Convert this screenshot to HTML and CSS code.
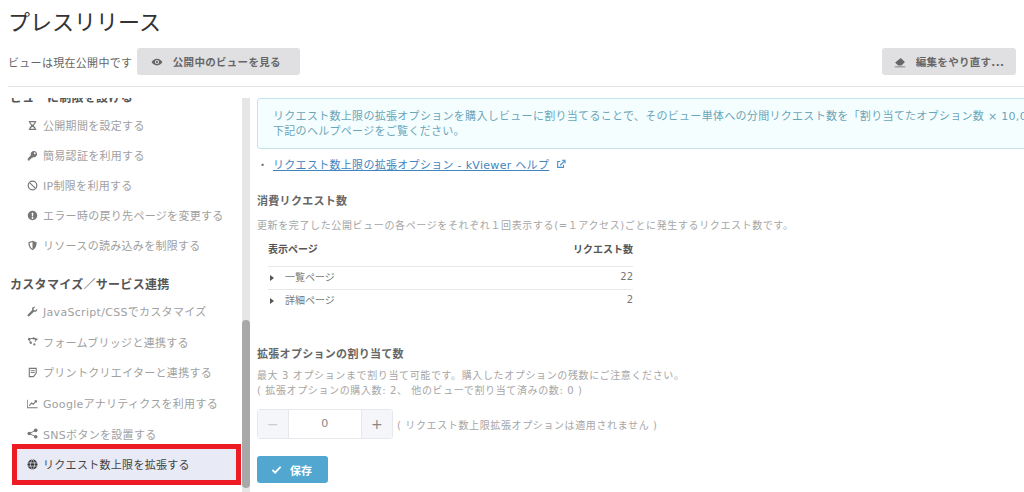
FILE: index.html
```html
<!DOCTYPE html>
<html lang="ja">
<head>
<meta charset="utf-8">
<title>プレスリリース</title>
<link rel="stylesheet" href="styles.css">
</head>
<body>
<header class="head">
  <h1 class="title">プレスリリース</h1>
  <div class="toolbar">
    <span class="status">ビューは現在公開中です</span>
    <button class="btn btn-left"><svg class="ico-btn" viewBox="0 0 16 16"><path d="M8 3.500C4.500 3.500 1.800 6 .8 8c1 2 3.700 4.500 7.200 4.500S14.200 10 15.200 8C14.200 6 11.500 3.500 8 3.500zm0 7.300A2.800 2.800 0 1 1 8 5.200a2.800 2.800 0 0 1 0 5.600zM8 6.500a1.500 1.500 0 1 0 0 3 1.500 1.500 0 0 0 0-3z" fill-rule="evenodd"/></svg>公開中のビューを見る</button>
    <button class="btn btn-right"><svg class="ico-btn" viewBox="0 0 16 16"><path d="M9 2.500l5.500 5.500L10 12.500H5.500L1.500 8.500z M1 14h14v1H1z"/></svg>編集をやり直す...</button>
  </div>
</header>
<div class="body">
  <nav class="side">
    <div class="side-scroll">
      <h2 class="side-h first">ビューに制限を設ける</h2>
      <a class="item"><svg class="ico" viewBox="0 0 12 12"><path d="M2 1h8v1.500H9.500C9.500 4.500 7.500 5 7.500 6s2 1.500 2 3.500H10V11H2V9.500h.5C2.500 7.500 4.500 7 4.500 6s-2-1.500-2-3.500H2zM3.700 2.500C3.900 4 5.500 4.800 6 5.200 6.500 4.800 8.100 4 8.300 2.500zM6 7.300c-.8.500-2 1.200-2.200 2.200h4.400C8 8.500 6.800 7.800 6 7.300z" fill-rule="evenodd"/></svg>公開期間を設定する</a>
      <a class="item"><svg class="ico" viewBox="0 0 12 12"><path d="M7.500 1a3.500 3.500 0 1 1-1 6.850L5.500 9H4.300v1.200H3V11.500H.8V9.500L4.200 5.500A3.500 3.500 0 0 1 7.500 1zM8.500 2.500a1 1 0 1 0 0 2 1 1 0 0 0 0-2z" fill-rule="evenodd"/></svg>簡易認証を利用する</a>
      <a class="item"><svg class="ico" viewBox="0 0 12 12"><circle cx="6" cy="6" r="4.700" fill="none" stroke="currentColor" stroke-width="1.300"/><path d="M2.800 2.800l6.400 6.400" stroke="currentColor" stroke-width="1.300"/></svg>IP制限を利用する</a>
      <a class="item"><svg class="ico" viewBox="0 0 12 12"><path d="M6 .8a5.200 5.200 0 1 0 0 10.400A5.200 5.200 0 0 0 6 .8zM5.100 3h1.800l-.3 4H5.400zM6 7.700a1 1 0 1 1 0 2 1 1 0 0 1 0-2z" fill-rule="evenodd"/></svg>エラー時の戻り先ページを変更する</a>
      <a class="item"><svg class="ico" viewBox="0 0 12 12"><path d="M6 .8L1.500 2.500c0 4 1 7 4.500 8.700 3.500-1.700 4.500-4.700 4.500-8.700zM6 2.300v7.400C3.800 8.500 3 6.500 2.900 3.400z" fill-rule="evenodd"/></svg>リソースの読み込みを制限する</a>
      <h2 class="side-h">カスタマイズ／サービス連携</h2>
      <a class="item"><svg class="ico" viewBox="0 0 12 12"><path d="M11 3L9 5 7.500 4.500 7 3l2-2C7.500.5 5.500 1.300 5.500 3.200c0 .5 0 .8.200 1.200L1 9.200c-.6.600-.6 1.300-.1 1.800s1.200.5 1.800-.1l4.800-4.700c2 .8 4.300-.8 3.500-3.200z"/></svg>JavaScript/CSSでカスタマイズ</a>
      <a class="item"><svg class="ico" viewBox="0 0 12 12"><path d="M1 3.500a1.500 1.500 0 0 1 2.600-1L6 2.300A1.200 1.200 0 0 1 8.200 2L10 2.700a1 1 0 1 1 .3 1.800L9 6.500 8.300 6l1-1.700-1.800-.7A1.200 1.200 0 0 1 6 3.200l-2.300.3-.5 1 .8 1.500a1.300 1.300 0 1 1-.9.400L2.300 5A1.500 1.500 0 0 1 1 3.500zM8 8a1.200 1.200 0 1 1 0 2.400A1.200 1.200 0 0 1 8 8z"/></svg>フォームブリッジと連携する</a>
      <a class="item"><svg class="ico" viewBox="0 0 12 12"><path d="M2.500 1.500h7.500v5.500L7 10.500H2.500z" fill="none" stroke="currentColor" stroke-width="1.200"/><path d="M4 4h4.500M4 6h4.500" stroke="currentColor"/></svg>プリントクリエイターと連携する</a>
      <a class="item"><svg class="ico" viewBox="0 0 12 12"><path d="M.8 2v8.200H11.500v1H0V2z"/><path d="M2.500 8.300L5 5.500l1.800 1.300L10 3.200M8.200 3H10.300V5" fill="none" stroke="currentColor" stroke-width="1.200"/></svg>Googleアナリティクスを利用する</a>
      <a class="item"><svg class="ico" viewBox="0 0 12 12"><circle cx="9.500" cy="2.500" r="2"/><circle cx="2.500" cy="6" r="2"/><circle cx="9.500" cy="9.500" r="2"/><path d="M9.500 2.500L2.500 6l7 3.500" fill="none" stroke="currentColor"/></svg>SNSボタンを設置する</a>
      <a class="item active"><svg class="ico" viewBox="0 0 12 12"><circle cx="6" cy="6" r="5.400"/><path d="M.5 4.300h11M.5 7.700h11M6 .6C3 3.500 3 8.500 6 11.400M6 .6c3 2.900 3 7.900 0 10.800" fill="none" stroke="#e8eaf6" stroke-width=".8"/></svg>リクエスト数上限を拡張する</a>
    </div>
    <div class="scrollbar"><div class="thumb"></div></div>
  </nav>
  <main class="main">
    <div class="alert">リクエスト数上限の拡張オプションを購入しビューに割り当てることで、そのビュー単体への分間リクエスト数を「割り当てたオプション数 × 10,000」<br>下記のヘルプページをご覧ください。</div>
    <p class="linkline"><span class="dot">・</span><a class="link">リクエスト数上限の拡張オプション - kViewer ヘルプ</a><svg class="ext" viewBox="0 0 12 12"><path d="M9 7v3H2V3h3" fill="none" stroke="currentColor" stroke-width="1.300"/><path d="M5 7.500L10 2.500M7 1.500h3.800v3.800" fill="none" stroke="currentColor" stroke-width="1.300"/></svg></p>
    <h3 class="sec">消費リクエスト数</h3>
    <p class="desc">更新を完了した公開ビューの各ページをそれぞれ１回表示する(=１アクセス)ごとに発生するリクエスト数です。</p>
    <table class="tbl">
      <thead><tr><th>表示ページ</th><th class="num">リクエスト数</th></tr></thead>
      <tbody>
        <tr><td><span class="caret"></span>一覧ページ</td><td class="num">22</td></tr>
        <tr><td><span class="caret"></span>詳細ページ</td><td class="num">2</td></tr>
      </tbody>
    </table>
    <h3 class="sec sec2">拡張オプションの割り当て数</h3>
    <p class="desc">最大 3 オプションまで割り当て可能です。購入したオプションの残数にご注意ください。<br>( 拡張オプションの購入数: 2、 他のビューで割り当て済みの数: 0 )</p>
    <div class="stepline">
      <div class="stepper"><span class="step muted">−</span><span class="val">0</span><span class="step">+</span></div>
      <span class="hint">( リクエスト数上限拡張オプションは適用されません )</span>
    </div>
    <button class="save"><svg class="check" viewBox="0 0 12 12"><path d="M1.500 6.500l3 3 6-6.500" fill="none" stroke="currentColor" stroke-width="2"/></svg>保存</button>
  </main>
</div>
</body>
</html>
```
FILE: styles.css
```css
* { box-sizing: border-box; }
html, body { margin: 0; height: 492px; overflow: hidden; background: #fff; }
body {
  font-family: "DejaVu Sans", "Noto Sans CJK JP", sans-serif;
  font-size: 11px;
  letter-spacing: .3px;
  color: #9a9a9a;
  width: 1024px;
}
.head { height: 87px; margin-left: 8px; padding-top: 8px; border-bottom: 1px solid #e4e4e4; }
.title { margin: 0; height: 40px; font-size: 22px; line-height: 30px; font-weight: 400; color: #333; letter-spacing: 0; }
.toolbar { display: flex; align-items: center; gap: 5px; padding-right: 8px; }
.status { color: #666; font-size: 11px; }
.btn {
  display: flex; align-items: center; justify-content: center; gap: 10px; white-space: nowrap;
  height: 27px; padding: 0; border: 0; border-radius: 3px;
  background: #e0e0e2; color: #666; font: 700 10.500px "DejaVu Sans", "Noto Sans CJK JP", sans-serif; letter-spacing: .3px;
}
.btn-left { width: 163px; padding-right: 6px; }
.btn-right { margin-left: auto; width: 134px; }
.ico-btn { width: 12px; height: 12px; fill: currentColor; }
.body { display: flex; height: 394px; margin-top: 11px; }
.side { display: flex; width: 250px; flex: none; height: 394px; overflow: hidden; }
.side-scroll { width: 242px; flex: none; margin-top: -8px; }
.side-h { margin: 0 0 0 10px; font-size: 12px; line-height: 16px; font-weight: 700; color: #555; }
.side-h.first { height: 20px; }
.side-h:not(.first) { margin-top: 17px; margin-bottom: 3px; }
.item {
  display: flex; align-items: center; margin: 0 6px 0 17px; height: 30px; padding-left: 10px; color: #a0a0a0;
}
.side-h:not(.first) ~ .item { height: 30.600px; }
.ico { width: 11px; height: 11px; margin-right: 5px; fill: currentColor; color: #777; flex: none; }
.item.active {
  background: #e8eaf6; color: #444; outline: 5px solid #ed1c24;
}
.item.active .ico { color: #333; }
.scrollbar { width: 8px; height: 394px; background: #e6e6e6; padding-top: 222px; }
.thumb { height: 168px; background: #a8a8a8; border-radius: 4px; }
.main { flex: none; width: 800px; margin-left: 7px; overflow: visible; }
.alert {
  width: 900px; height: 51px; padding: 10px 15px; border: 1px solid #c4e4ee; border-radius: 3px;
  background: #f5feff; color: #6ba5b8; line-height: 15px; white-space: nowrap; overflow: hidden;
}
.linkline { display: flex; align-items: center; margin: 7px 0 0; height: 16px; color: #666; }
.dot { width: 16px; flex: none; }
.link { color: #3f86c0; text-decoration: underline; }
.ext { width: 10px; height: 10px; margin-left: 7px; color: #4a90c8; }
.sec { margin: 22px 0 0; font-size: 11px; line-height: 16px; font-weight: 700; color: #666; }
.sec2 { margin-top: 35px; }
.desc { margin: 8px 0 0; font-size: 10px; letter-spacing: .62px; line-height: 15px; color: #a6a6a6; white-space: nowrap; }
.sec2 + .desc { margin-top: 5px; }
.tbl { margin: 2px 0 0 11px; width: 365px; border-collapse: collapse; font-size: 10px; letter-spacing: 0; color: #777; }
.tbl th { height: 31px; padding: 0 0 4px; text-align: left; font-weight: 700; color: #555; border-bottom: 1px solid #e8e8e8; }
.tbl td { height: 23px; padding: 0 0 2px; }
.tbl tbody tr:first-child td { border-bottom: 1px solid #e8e8e8; }
.tbl .num { text-align: right; }
.caret { display: inline-block; margin: 0 11px 0 2px; border-left: 4px solid #555; border-top: 3px solid transparent; border-bottom: 3px solid transparent; }
.stepline { display: flex; align-items: center; gap: 4px; margin-top: 11px; }
.stepper { display: flex; width: 136px; height: 30px; border: 1px solid #e6e8ec; border-radius: 3px; }
.step { width: 30px; display: flex; align-items: center; justify-content: center; background: #f5f6f9; color: #888; font-size: 14px; }
.step.muted { color: #ccc; }
.val { flex: 1; text-align: center; line-height: 28px; color: #888; border-left: 1px solid #e6e8ec; border-right: 1px solid #e6e8ec; }
.hint { color: #a6a6a6; font-size: 10px; letter-spacing: .62px; }
.save {
  display: flex; align-items: center; gap: 8px; width: 71px; height: 27px; margin-top: 17px; padding-left: 14px;
  border: 0; border-radius: 3px; background: #52a7d0; color: #fff;
  font: 700 11px "DejaVu Sans", "Noto Sans CJK JP", sans-serif;
}
.check { width: 11px; height: 11px; }
```
